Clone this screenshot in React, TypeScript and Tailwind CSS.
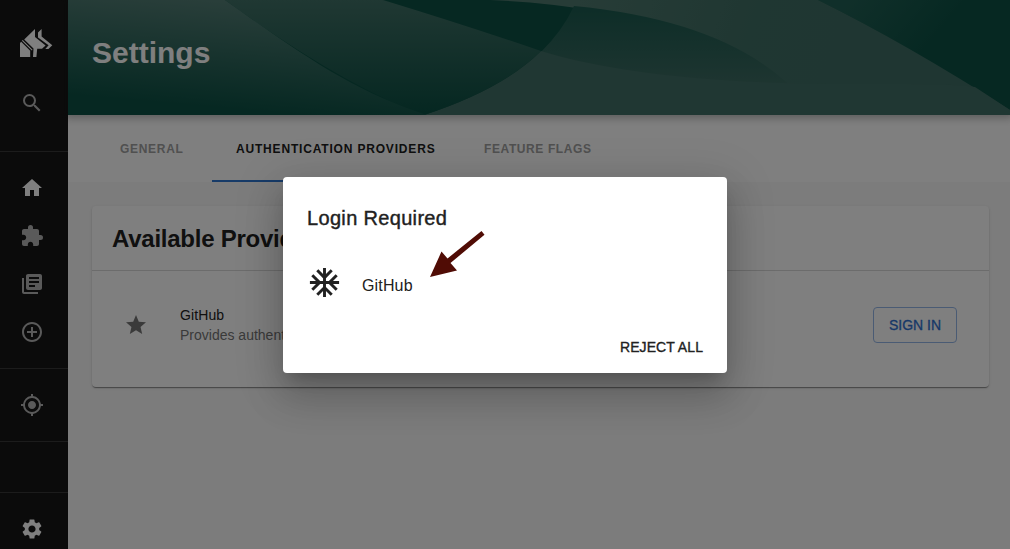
import React from "react";
import {
  MdSearch, MdHome, MdExtension, MdLibraryBooks, MdAddCircleOutline,
  MdMyLocation, MdSettings, MdStar, MdAcUnit,
} from "react-icons/md";

function Logo() {
  return (
    <svg width="34" height="30" viewBox="0 0 34 30" fill="#fff" className="ml-[19px]">
      <path d="M16 1V9L26.6 17.6L23 20.8H18.2L17.4 29H14L14.5 20.6L5.2 11.4Z" />
      <path d="M19 4.5L22.6 1V8.6L33.3 17.2L29.4 21H26.3L29.6 17.2L19 9.5Z" />
      <path d="M1 14.9L2.2 13.7L11.2 22.7V29H1Z" />
      <path d="M3.3 12.4L13.2 22.1" stroke="#fff" strokeWidth="1.1" />
    </svg>
  );
}

function NavItem({ children, active = false }: { children: React.ReactNode; active?: boolean }) {
  return (
    <div className={`flex h-12 w-16 shrink-0 items-center justify-center ${active ? "text-white" : "text-[#b5b5b5]"}`}>
      {children}
    </div>
  );
}

function Rule() {
  return <div className="h-px w-full shrink-0 bg-[#383838]" />;
}

function Sidebar() {
  return (
    <nav className="flex w-[68px] shrink-0 flex-col bg-[#171717]">
      <div className="flex h-[79px] shrink-0 items-start pt-[28px]"><Logo /></div>
      <NavItem><MdSearch size={24} /></NavItem>
      <div className="h-6 shrink-0" />
      <Rule />
      <div className="h-3 shrink-0" />
      <NavItem active><MdHome size={24} /></NavItem>
      <NavItem><MdExtension size={24} /></NavItem>
      <NavItem><MdLibraryBooks size={24} /></NavItem>
      <NavItem><MdAddCircleOutline size={24} /></NavItem>
      <div className="h-3 shrink-0" />
      <Rule />
      <div className="h-3 shrink-0" />
      <NavItem><MdMyLocation size={24} /></NavItem>
      <div className="h-3 shrink-0" />
      <Rule />
      <div className="h-[50px] shrink-0" />
      <Rule />
      <div className="h-3 shrink-0" />
      <NavItem active><MdSettings size={24} /></NavItem>
    </nav>
  );
}

function HeaderWaves() {
  return (
    <svg className="absolute inset-0" width="942" height="115" viewBox="68 0 942 115">
      <defs>
        <linearGradient id="left" gradientUnits="userSpaceOnUse" x1="300" y1="0" x2="290" y2="115">
          <stop offset="0" stopColor="#588078" /><stop offset="1" stopColor="#0c5044" />
        </linearGradient>
        <linearGradient id="middle" x1="0" y1="0" x2="0" y2="1">
          <stop offset="0" stopColor="#407066" /><stop offset="1" stopColor="#0a4e42" />
        </linearGradient>
        <linearGradient id="band" gradientUnits="userSpaceOnUse" x1="580" y1="0" x2="900" y2="115">
          <stop offset="0" stopColor="#4e786e" /><stop offset="0.5" stopColor="#3f6e64" /><stop offset="1" stopColor="#3e6c64" />
        </linearGradient>
        <linearGradient id="lens" gradientUnits="userSpaceOnUse" x1="0" y1="10" x2="0" y2="85">
          <stop offset="0" stopColor="#1c5b50" /><stop offset="1" stopColor="#3d6b62" />
        </linearGradient>
        <linearGradient id="corner" gradientUnits="userSpaceOnUse" x1="850" y1="0" x2="920" y2="60">
          <stop offset="0" stopColor="#215f54" /><stop offset="1" stopColor="#0c5044" />
        </linearGradient>
      </defs>
      <rect x="68" width="942" height="115" fill="#0c5044" />
      <path d="M818 0H1010V110Q905 43 818 0Z" fill="url(#corner)" />
      <path d="M490 0H818Q905 43 1010 110V115H790Q720 10 490 0Z" fill="url(#band)" />
      <path d="M574 6Q740 22 806 103L809 115H480L541 52Q563 30 574 6Z" fill="url(#lens)" />
      <path d="M424 115Q503 89 541 51C610 72 710 84 850 84C920 84 955 84 975 87L1010 110V115Z" fill="#416e66" />
      <path d="M225 0H383Q465 25 541 51Q503 89 424 115Q340 84 225 0Z" fill="url(#middle)" />
      <path d="M68 0H225C305 57 355 92 427 115H68Z" fill="url(#left)" />
    </svg>
  );
}

export default function App() {
  return (
    <div className="relative flex h-[549px] w-[1010px] overflow-hidden bg-[#f8f8f8] font-['Liberation_Sans',Arial,sans-serif] text-[#212121]">
      <Sidebar />
      <main className="flex grow flex-col">
        <header className="relative z-10 h-[115px] shrink-0 shadow-[0_0_8px_3px_rgba(20,20,20,0.3)]">
          <HeaderWaves />
          <h1 className="relative pt-[34px] pl-6 text-[30px] leading-[37px] font-bold text-white">Settings</h1>
        </header>
        <div className="flex h-[67px] shrink-0 bg-white pl-7 text-[12px] leading-[69px] font-bold whitespace-nowrap text-[#a0a0a0]">
          <div className="w-[116px] pl-6 tracking-[0.7px]">GENERAL</div>
          <div className="h-[67px] w-[248px] border-b-2 border-[#2e77d0] pl-6 tracking-[0.82px] text-[#212121]">AUTHENTICATION PROVIDERS</div>
          <div className="pl-6 tracking-[0.6px]">FEATURE FLAGS</div>
        </div>
        <section className="mt-6 ml-6 h-[181px] w-[897px] rounded bg-white shadow-[0_2px_1px_-1px_rgba(0,0,0,0.25),0_1px_1px_rgba(0,0,0,0.18),0_1px_3px_rgba(0,0,0,0.12)]">
          <h2 className="h-[65px] border-b border-[#d8d8d8] pl-5 text-[24px] leading-[65px] font-bold tracking-[-0.25px]">Available Providers</h2>
          <div className="flex h-[108px] items-center pl-8">
            <MdStar size={24} className="text-[#757575]" />
            <div className="ml-8 grow text-[14px] leading-5">
              <div className="tracking-[0.1px]">GitHub</div>
              <div className="text-[#757575]">Provides authentication towards GitHub APIs</div>
            </div>
            <button className="mr-8 h-9 w-[84px] rounded border border-[#95b7e8] text-[14px] text-[#2e70d0] [-webkit-text-stroke:0.3px_#2e70d0]">SIGN IN</button>
          </div>
        </section>
      </main>

      <div className="absolute inset-0 z-20 flex items-start justify-center bg-black/50 pt-[177px]">
        <div role="dialog" className="relative flex h-[196px] w-[444px] flex-col rounded bg-white shadow-[0_11px_15px_-7px_rgba(0,0,0,0.2),0_24px_38px_3px_rgba(0,0,0,0.14),0_9px_46px_8px_rgba(0,0,0,0.12)]">
          <h3 className="pt-[25px] pl-6 text-[20px] leading-8 tracking-[0.33px] [-webkit-text-stroke:0.4px_#212121]">Login Required</h3>
          <div className="mt-[30px] flex h-9 items-center pl-6">
            <MdAcUnit size={35} />
            <span className="mt-[8px] ml-[20px] text-[16px] tracking-[0.15px]">GitHub</span>
          </div>
          <button className="mt-[29px] mr-6 self-end text-[14px] leading-[36px] tracking-[0.08px] [-webkit-text-stroke:0.35px_#212121]">REJECT ALL</button>
          <svg className="absolute top-[53px] left-[146px]" width="56" height="48" viewBox="429 230 56 48" fill="#500c05">
            <path d="M430 277L441.5 251.5L447.5 258.5L481.5 231L484.5 234.8L450.5 263L457 270.5Z" />
          </svg>
        </div>
      </div>
    </div>
  );
}
